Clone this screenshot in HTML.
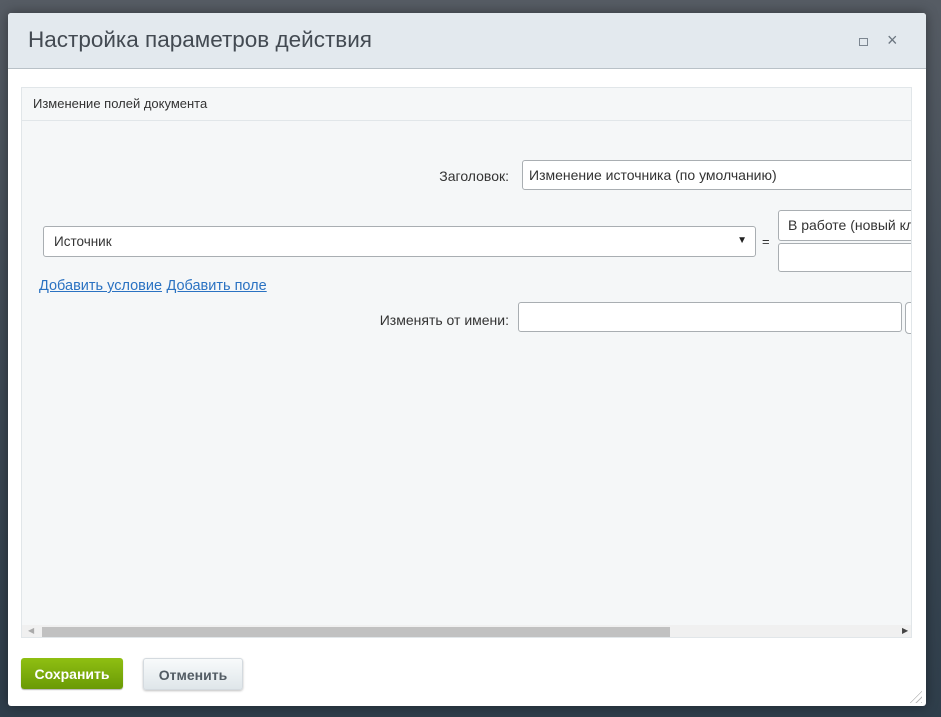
<!DOCTYPE html>
<html><head><meta charset="utf-8"><style>
*{box-sizing:border-box;margin:0;padding:0}
body{width:941px;height:717px;overflow:hidden;background:linear-gradient(#565c64,#3f4a55 50%,#2f3e4b);font-family:"Liberation Sans",Arial,sans-serif;position:relative}
.a{position:absolute}
.dlg{left:8px;top:13px;width:918px;height:693px;background:#fff;border-radius:3px;overflow:hidden;box-shadow:0 0 12px rgba(0,0,0,.4)}
.hdr{left:0;top:0;width:918px;height:56px;background:#e3e9ee;border-bottom:1px solid #b9c1c7}
.ttl{left:20px;top:14px;font-size:22.5px;color:#434a52}
.panel{left:13px;top:74px;width:891px;height:551px;background:#f5f7f8;border:1px solid #e1e6e9;overflow:hidden}
.ph{left:0;top:0;width:100%;height:33px;border-bottom:1px solid #e1e6e9;font-size:13px;color:#333;padding:8px 0 0 11px}
.inp{background:#fff;border:1px solid #a9aeb2;border-radius:3px;font-size:14px;color:#333}
.lbl{font-size:14px;color:#333;text-align:right}
a{color:#2a72c2;font-size:14.5px}
.btn{border-radius:3px;font-size:14px;font-weight:bold;text-align:center;line-height:32px}
</style></head><body>
<div class="a dlg">
 <div class="a hdr"><div class="a ttl">Настройка параметров действия</div>
  <div class="a" style="left:851px;top:25px;width:9px;height:8px;border:1px solid #7c8690"></div>
  <div class="a" style="left:879px;top:17px;font-size:18px;color:#6c7680">×</div>
 </div>
 <div class="a panel">
  <div class="a ph">Изменение полей документа</div>
  <div class="a lbl" style="left:290px;top:80px;width:197px">Заголовок:</div>
  <div class="a inp" style="left:500px;top:72px;width:420px;height:30px;padding:6px 0 0 6px">Изменение источника (по умолчанию)</div>
  <div class="a inp" style="left:21px;top:138px;width:713px;height:31px;padding:7px 0 0 10px;font-size:13.5px">Источник<span class="a" style="right:8px;top:8px;font-size:10px;color:#222">▼</span></div>
  <div class="a" style="left:740px;top:146px;font-size:13px;color:#333">=</div>
  <div class="a inp" style="left:756px;top:122px;width:160px;height:31px;padding:6px 0 0 9px;white-space:nowrap">В работе (новый клиент)</div>
  <div class="a inp" style="left:756px;top:155px;width:160px;height:29px"></div>
  <div class="a" style="left:17px;top:189px"><a href="#">Добавить условие</a> <a href="#">Добавить поле</a></div>
  <div class="a lbl" style="left:290px;top:224px;width:197px">Изменять от имени:</div>
  <div class="a inp" style="left:496px;top:214px;width:384px;height:30px"></div>
  <div class="a inp" style="left:883px;top:214px;width:20px;height:32px;border-radius:4px"></div>
  <div class="a" style="left:0;top:537px;width:100%;height:13px;background:#f0f0f0"></div>
  <div class="a" style="left:20px;top:539px;width:628px;height:13px;background:#c1c1c1"></div>
  <div class="a" style="left:6px;top:538px;font-size:8px;color:#aaa">◀</div>
  <div class="a" style="left:880px;top:538px;font-size:8px;color:#444">▶</div>
 </div>
 <div class="a btn" style="left:13px;top:645px;width:102px;height:31px;background:linear-gradient(#8fbf12,#6a9a05);color:#fff;box-shadow:0 1px 1px rgba(0,0,0,.3)">Сохранить</div>
 <div class="a btn" style="left:135px;top:645px;width:100px;height:32px;background:linear-gradient(#f8fafb,#dfe6ea);color:#535c64;box-shadow:0 1px 2px rgba(0,0,0,.25);border:1px solid #d4dadf">Отменить</div>
 <div class="a" style="left:900px;top:676px;width:14px;height:14px;background:repeating-linear-gradient(135deg,transparent 0 3px,#bbb 3px 4px);clip-path:polygon(100% 0,100% 100%,0 100%)"></div>
</div>
</body></html>
